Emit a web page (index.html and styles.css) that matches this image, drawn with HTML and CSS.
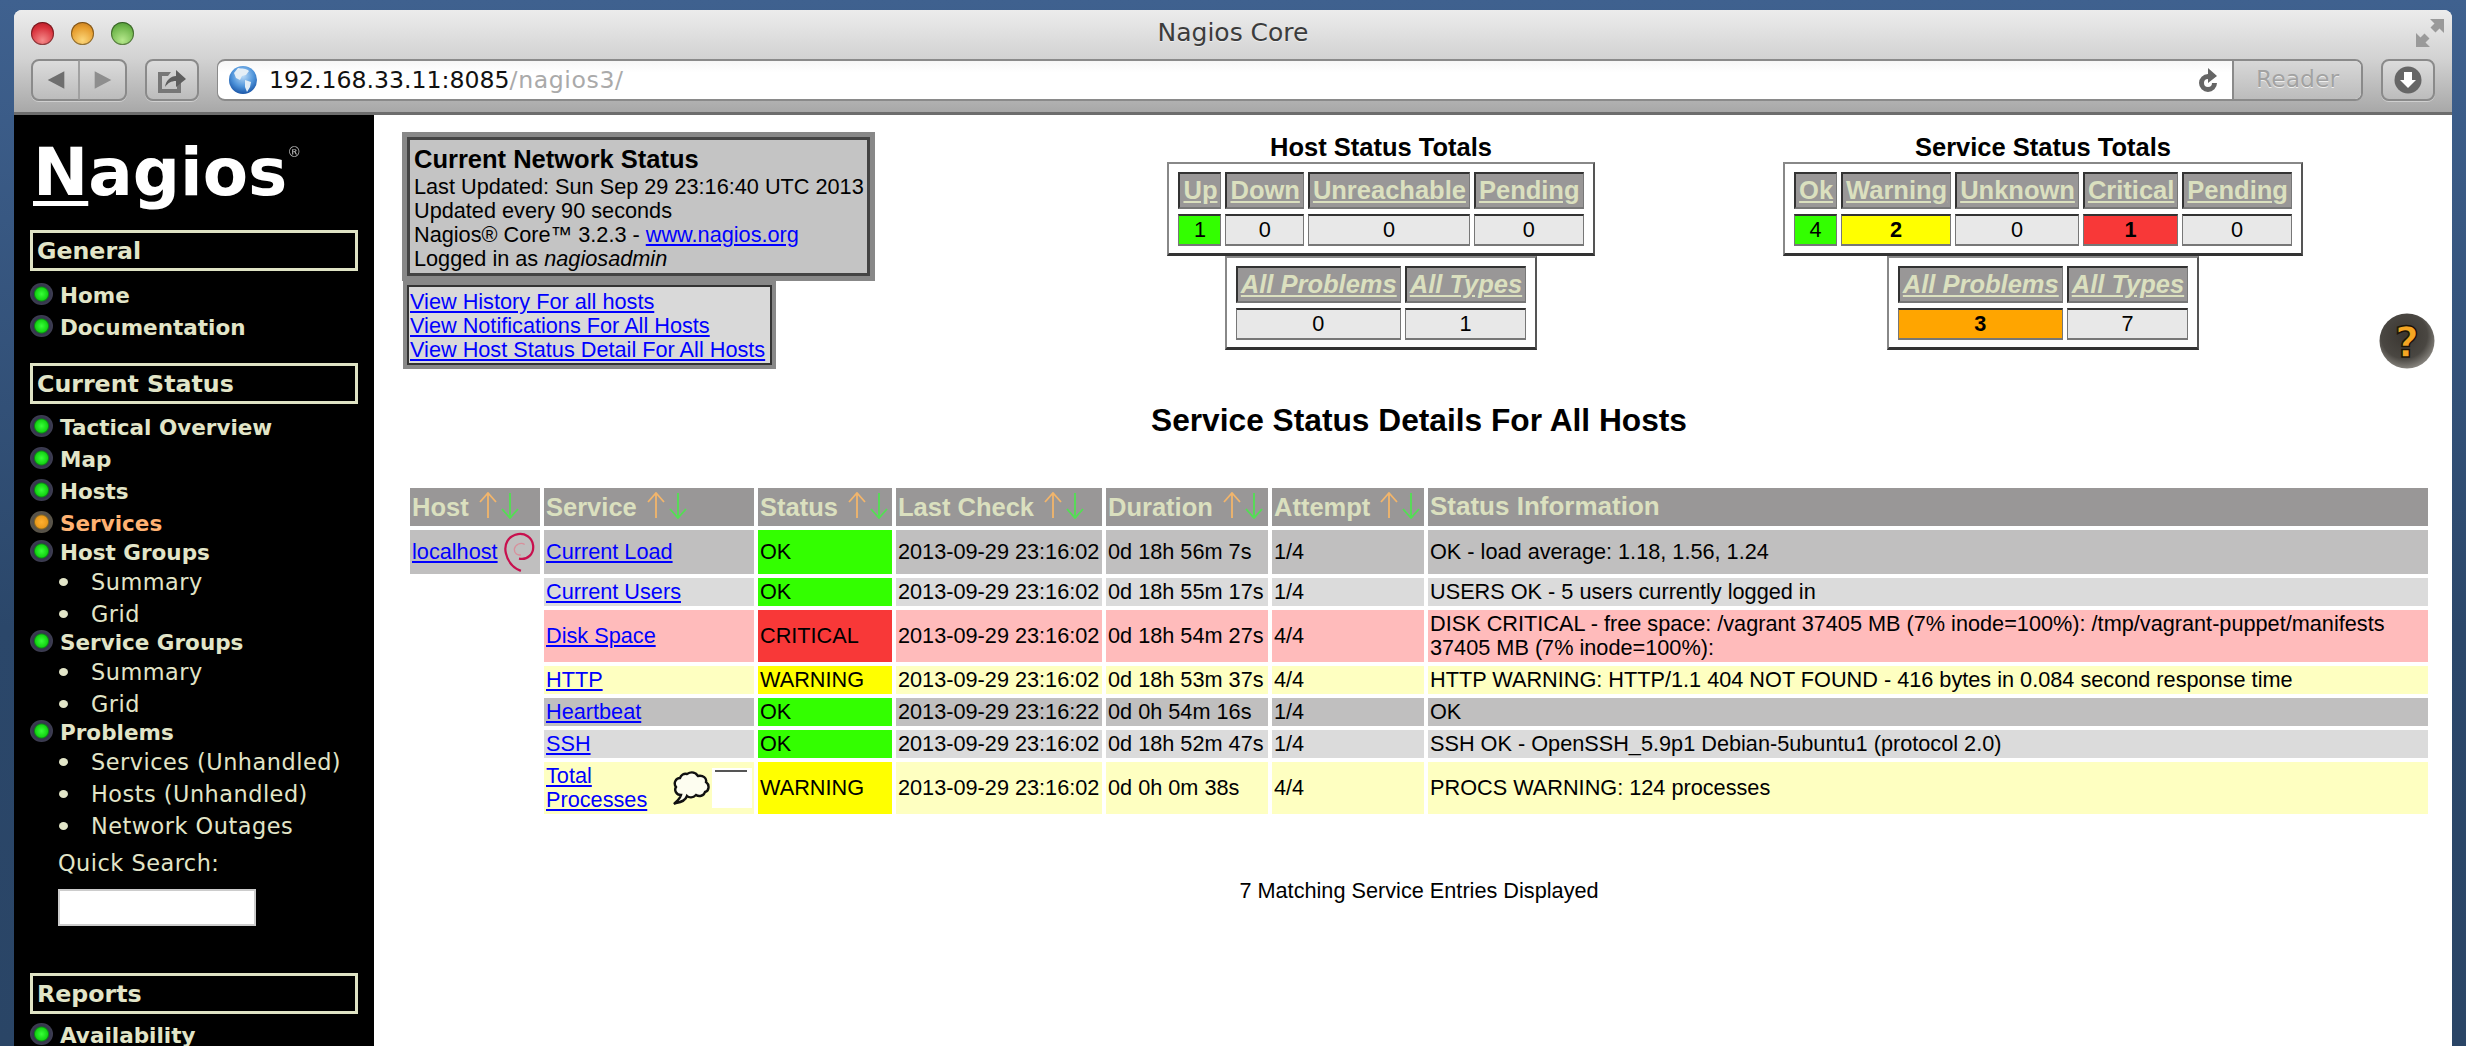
FILE: index.html
```html
<!DOCTYPE html>
<html lang="en">
<head>
  <meta charset="UTF-8">
  <title>Nagios Core</title>
  <link rel="stylesheet" href="styles.css">
</head>
<body>
  <div class="window">
    <!-- browser chrome -->
    <div class="chrome">
      <div class="titlebar">
        <div class="lights">
          <span class="light light-red"></span>
          <span class="light light-yellow"></span>
          <span class="light light-green"></span>
        </div>
        <div class="win-title">Nagios Core</div>
        <div class="fullscreen">
          <svg width="28" height="28" viewBox="0 0 28 28"><path d="M28 0v14l-4.500-4.500-4 4-5-5 4-4L14 0zM0 28V14l4.500 4.500 4-4 5 5-4 4L14 28z" fill="#9a9a9a"/></svg>
        </div>
      </div>
      <div class="toolbar">
        <div class="tool-btn nav-btns">
          <svg width="48" height="40" viewBox="0 0 48 40"><path d="M32 11v18L15 20z" fill="#6e6e6e"/><path d="M47 0v40" stroke="#a0a0a0" stroke-width="2"/></svg>
          <svg width="46" height="40" viewBox="0 0 46 40"><path d="M15 11v18l17-9z" fill="#8e8e8e"/></svg>
        </div>
        <div class="tool-btn share-btn">
          <svg width="30" height="30" viewBox="0 0 30 30"><path d="M1 7h13l-3 4H5v13h15v-6l4-3v13H1z" fill="#777"/><path d="M8 22c1-7 6-11 11-11V5l10 9-10 8v-6c-5 0-8 2-11 6z" fill="#5e5e5e"/></svg>
        </div>
        <div class="address">
          <svg class="globe" width="28" height="28" viewBox="0 0 28 28">
            <defs><radialGradient id="sea" cx="50%" cy="35%" r="65%"><stop offset="0" stop-color="#bcdcf8"/><stop offset="0.6" stop-color="#4f94da"/><stop offset="1" stop-color="#1a56a8"/></radialGradient></defs>
            <circle cx="14" cy="14" r="14" fill="url(#sea)"/>
            <path d="M9 2c4 1 8 0 11 3l-3 4-4 1-2 4-4-2-2-5zM16 14l6 2-1 5-3 5-2-5z" fill="#e4eef6"/>
          </svg>
          <span class="url"><span class="url-host">192.168.33.11:8085</span><span class="url-path">/nagios3/</span></span>
          <svg class="reload" width="22" height="24" viewBox="0 0 22 24"><path d="M11 6a9 9 0 1 0 9 9h-5a4 4 0 1 1-4-4v4l9-7-9-8z" fill="#666"/></svg>
          <div class="reader">Reader</div>
        </div>
        <div class="tool-btn download-btn">
          <svg width="28" height="28" viewBox="0 0 28 28"><circle cx="14" cy="14" r="13.500" fill="#666"/><path d="M10 6h8v8h4l-8 8-8-8h4z" fill="#fff"/></svg>
        </div>
      </div>
    </div>

    <div class="page">
      <!-- nagios side menu -->
      <div class="sidebar">
        <div class="logo"><span class="logo-n">N</span>agios<sup class="logo-reg">®</sup></div>

        <div class="nav-head">General</div>
        <div class="nav-list">
          <div class="nav-item"><span class="led"></span>Home</div>
          <div class="nav-item"><span class="led"></span>Documentation</div>
        </div>

        <div class="nav-head nav-head-next">Current Status</div>
        <div class="nav-list nav-list-tight">
          <div class="nav-item"><span class="led"></span>Tactical Overview</div>
          <div class="nav-item"><span class="led"></span>Map</div>
          <div class="nav-item"><span class="led"></span>Hosts</div>
          <div class="nav-item nav-active"><span class="led led-orange"></span>Services</div>
          <div class="nav-item nav-parent"><span class="led"></span>Host Groups</div>
          <div class="nav-sub">Summary</div>
          <div class="nav-sub">Grid</div>
          <div class="nav-item nav-parent"><span class="led"></span>Service Groups</div>
          <div class="nav-sub">Summary</div>
          <div class="nav-sub">Grid</div>
          <div class="nav-item nav-parent"><span class="led"></span>Problems</div>
          <div class="nav-sub">Services (Unhandled)</div>
          <div class="nav-sub">Hosts (Unhandled)</div>
          <div class="nav-sub">Network Outages</div>
        </div>
        <div class="search-label">Quick Search:</div>
        <div class="search-box"></div>

        <div class="nav-head">Reports</div>
        <div class="nav-list nav-list-reports">
          <div class="nav-item"><span class="led"></span>Availability</div>
        </div>
      </div>

      <div class="content">
        <div class="top-row">
          <div class="info-col">
            <div class="info-box">
              <div class="info-title">Current Network Status</div>
              <div>Last Updated: Sun Sep 29 23:16:40 UTC 2013</div>
              <div>Updated every 90 seconds</div>
              <div>Nagios® Core™ 3.2.3 - <a href="#">www.nagios.org</a></div>
              <div>Logged in as <i>nagiosadmin</i></div>
            </div>
            <div class="links-box">
              <div><a href="#">View History For all hosts</a></div>
              <div><a href="#">View Notifications For All Hosts</a></div>
              <div><a href="#">View Host Status Detail For All Hosts</a></div>
            </div>
          </div>

          <div class="totals totals-host">
            <div class="totals-title">Host Status Totals</div>
            <table class="totals-table">
              <tr><th><a href="#">Up</a></th><th><a href="#">Down</a></th><th><a href="#">Unreachable</a></th><th><a href="#">Pending</a></th></tr>
              <tr><td class="bg-ok">1</td><td>0</td><td>0</td><td>0</td></tr>
            </table>
            <table class="totals-table totals-sub">
              <tr><th><a href="#">All Problems</a></th><th><a href="#">All Types</a></th></tr>
              <tr><td>0</td><td>1</td></tr>
            </table>
          </div>

          <div class="totals totals-service">
            <div class="totals-title">Service Status Totals</div>
            <table class="totals-table">
              <tr><th><a href="#">Ok</a></th><th><a href="#">Warning</a></th><th><a href="#">Unknown</a></th><th><a href="#">Critical</a></th><th><a href="#">Pending</a></th></tr>
              <tr><td class="bg-ok">4</td><td class="bg-warn strong">2</td><td>0</td><td class="bg-crit strong">1</td><td>0</td></tr>
            </table>
            <table class="totals-table totals-sub">
              <tr><th><a href="#">All Problems</a></th><th><a href="#">All Types</a></th></tr>
              <tr><td class="bg-orange strong">3</td><td>7</td></tr>
            </table>
          </div>

          <svg class="help" width="56" height="56" viewBox="0 0 56 56">
            <defs><radialGradient id="knob" cx="45%" cy="40%" r="60%"><stop offset="0" stop-color="#3a3631"/><stop offset="0.7" stop-color="#4a4742"/><stop offset="1" stop-color="#85827c"/></radialGradient></defs>
            <circle cx="28" cy="28" r="27.500" fill="url(#knob)"/>
            <text x="28" y="44" text-anchor="middle" class="help-mark">?</text>
          </svg>
        </div>

        <div class="details">
          <div class="details-title">Service Status Details For All Hosts</div>
          <table class="status-table">
            <colgroup>
              <col class="c-host"><col class="c-service"><col class="c-status"><col class="c-check"><col class="c-duration"><col class="c-attempt"><col class="c-info">
            </colgroup>
            <tr>
              <th><span class="th-in">Host <svg width="42" height="27" viewBox="0 0 42 27"><path d="M10 26V2M2 10l8-9 8 9" class="arrow-up"/><path d="M32 1v24M24 17l8 9 8-9" class="arrow-down"/></svg></span></th>
              <th><span class="th-in">Service <svg width="42" height="27" viewBox="0 0 42 27"><path d="M10 26V2M2 10l8-9 8 9" class="arrow-up"/><path d="M32 1v24M24 17l8 9 8-9" class="arrow-down"/></svg></span></th>
              <th><span class="th-in">Status <svg width="42" height="27" viewBox="0 0 42 27"><path d="M10 26V2M2 10l8-9 8 9" class="arrow-up"/><path d="M32 1v24M24 17l8 9 8-9" class="arrow-down"/></svg></span></th>
              <th><span class="th-in">Last Check <svg width="42" height="27" viewBox="0 0 42 27"><path d="M10 26V2M2 10l8-9 8 9" class="arrow-up"/><path d="M32 1v24M24 17l8 9 8-9" class="arrow-down"/></svg></span></th>
              <th><span class="th-in">Duration <svg width="42" height="27" viewBox="0 0 42 27"><path d="M10 26V2M2 10l8-9 8 9" class="arrow-up"/><path d="M32 1v24M24 17l8 9 8-9" class="arrow-down"/></svg></span></th>
              <th><span class="th-in">Attempt <svg width="42" height="27" viewBox="0 0 42 27"><path d="M10 26V2M2 10l8-9 8 9" class="arrow-up"/><path d="M32 1v24M24 17l8 9 8-9" class="arrow-down"/></svg></span></th>
              <th class="th-info">Status Information</th>
            </tr>
            <tr class="row-odd">
              <td class="cell-host"><div class="cell-flex"><a href="#">localhost</a>
                <svg class="debian" width="32" height="40" viewBox="10 7 34 42"><path d="M27 35C36 37 43 30 42 21 41 12 33 8 26 9 15 11 11 20 13 29 15 38 21 45 29 48" fill="none" stroke="#c8104e" stroke-width="2.400"/><path d="M33 20C29 17 23 20 22 25 22 29 25 32 29 31" fill="none" stroke="#d8909c" stroke-width="1.400"/></svg>
              </div></td>
              <td><a href="#">Current Load</a></td>
              <td class="bg-ok">OK</td>
              <td>2013-09-29 23:16:02</td><td>0d 18h 56m 7s</td><td>1/4</td>
              <td>OK - load average: 1.18, 1.56, 1.24</td>
            </tr>
            <tr class="row-even">
              <td class="cell-blank"></td>
              <td><a href="#">Current Users</a></td>
              <td class="bg-ok">OK</td>
              <td>2013-09-29 23:16:02</td><td>0d 18h 55m 17s</td><td>1/4</td>
              <td>USERS OK - 5 users currently logged in</td>
            </tr>
            <tr class="row-crit">
              <td class="cell-blank"></td>
              <td><a href="#">Disk Space</a></td>
              <td class="bg-crit">CRITICAL</td>
              <td>2013-09-29 23:16:02</td><td>0d 18h 54m 27s</td><td>4/4</td>
              <td>DISK CRITICAL - free space: /vagrant 37405 MB (7% inode=100%): /tmp/vagrant-puppet/manifests 37405 MB (7% inode=100%):</td>
            </tr>
            <tr class="row-warn">
              <td class="cell-blank"></td>
              <td><a href="#">HTTP</a></td>
              <td class="bg-warn">WARNING</td>
              <td>2013-09-29 23:16:02</td><td>0d 18h 53m 37s</td><td>4/4</td>
              <td>HTTP WARNING: HTTP/1.1 404 NOT FOUND - 416 bytes in 0.084 second response time</td>
            </tr>
            <tr class="row-odd">
              <td class="cell-blank"></td>
              <td><a href="#">Heartbeat</a></td>
              <td class="bg-ok">OK</td>
              <td>2013-09-29 23:16:22</td><td>0d 0h 54m 16s</td><td>1/4</td>
              <td>OK</td>
            </tr>
            <tr class="row-even">
              <td class="cell-blank"></td>
              <td><a href="#">SSH</a></td>
              <td class="bg-ok">OK</td>
              <td>2013-09-29 23:16:02</td><td>0d 18h 52m 47s</td><td>1/4</td>
              <td>SSH OK - OpenSSH_5.9p1 Debian-5ubuntu1 (protocol 2.0)</td>
            </tr>
            <tr class="row-warn">
              <td class="cell-blank"></td>
              <td><div class="cell-flex"><a href="#">Total Processes</a>
                <span class="svc-icons">
                  <svg width="40" height="37" viewBox="0 0 40 37"><path d="M15 3c5-3 9-1 11 2 5-1 9 2 8 6 4 3 3 9-1 10-1 4-6 5-9 3-3 3-7 3-9 1-1 3-5 6-11 7l-2 1c3-3 6-5 7-9-5 0-7-5-5-8-3-4 0-9 4-9 1-3 4-5 7-4z" fill="#fdfdf0" stroke="#111" stroke-width="2.400"/></svg>
                  <span class="svc-note"></span>
                </span>
              </div></td>
              <td class="bg-warn">WARNING</td>
              <td>2013-09-29 23:16:02</td><td>0d 0h 0m 38s</td><td>4/4</td>
              <td>PROCS WARNING: 124 processes</td>
            </tr>
          </table>
          <div class="details-foot">7 Matching Service Entries Displayed</div>
        </div>
      </div>
    </div>
  </div>
</body>
</html>
```

FILE: styles.css
```css
html, body {
  margin: 0;
  height: 100%;
}

body {
  height: 1046px;
  overflow: hidden;
  box-sizing: border-box;
  padding: 10px 14px 0;
  background: linear-gradient(#3f618f, #2b476a 60%, #2a4566);
  font-family: "Liberation Sans", Arial, sans-serif;
  font-size: 21.7px;
  line-height: 24px;
  color: #000;
}

a { color: #0000ff; }

.window {
  height: 1036px;
  display: flex;
  flex-direction: column;
  overflow: hidden;
  border-radius: 8px 8px 0 0;
  background: #fff;
}

/* browser chrome */
.chrome {
  height: 105px;
  flex: none;
  box-sizing: border-box;
  background: linear-gradient(#ececec, #d2d2d2 48%, #a8a8a8);
  border-bottom: 3px solid #6d6d6d;
}

.titlebar {
  height: 49px;
  display: grid;
  grid-template-columns: 1fr auto 1fr;
  align-items: center;
  font-family: "DejaVu Sans", sans-serif;
}

.lights {
  display: flex;
  gap: 17px;
  padding: 0 0 3px 17px;
}

.light {
  width: 23px;
  height: 23px;
  border-radius: 50%;
  box-shadow: inset 0 0 0 1px rgba(0,0,0,0.4);
}

.light-red { background: radial-gradient(circle at 50% 80%, #f58a8a, #d8323c 60%, #a8121c); }
.light-yellow { background: radial-gradient(circle at 50% 80%, #fbd67a, #e69d2e 60%, #b8701a); }
.light-green { background: radial-gradient(circle at 50% 80%, #b6e88c, #72b84e 60%, #3f8a2a); }

.win-title {
  font-size: 25px;
  line-height: 30px;
  color: #3c3c3c;
  padding-bottom: 3px;
  text-shadow: 0 1px 0 rgba(255,255,255,0.5);
}

.fullscreen {
  justify-self: end;
  display: flex;
  padding: 0 8px 3px 0;
}

.toolbar {
  height: 42px;
  display: flex;
  gap: 18px;
  padding: 0 17px;
}

.tool-btn {
  box-sizing: border-box;
  height: 42px;
  display: flex;
  align-items: center;
  justify-content: center;
  border: 2px solid #8a8a8a;
  border-radius: 8px;
  background: linear-gradient(#dcdcdc, #bcbcbc);
  box-shadow: 0 1px 0 rgba(255,255,255,0.4);
}

.nav-btns { width: 96px; }
.share-btn { width: 54px; }
.download-btn { width: 54px; }

.address {
  flex: 1;
  height: 42px;
  box-sizing: border-box;
  display: flex;
  align-items: center;
  padding-left: 11px;
  border: 2px solid #8a8a8a;
  border-left-width: 1px;
  border-radius: 8px;
  background: linear-gradient(#f6f6f6, #fff 30%);
  overflow: hidden;
}

.globe { flex: none; }

.url {
  flex: 1;
  margin-left: 12px;
  font-family: "DejaVu Sans", sans-serif;
  font-size: 23.600px;
}

.url-host { color: #111; }
.url-path { color: #aaa; letter-spacing: 0.6px; }

.reload {
  flex: none;
  margin-right: 13px;
}

.reader {
  flex: none;
  width: 129px;
  height: 100%;
  box-sizing: border-box;
  border-left: 2px solid #8a8a8a;
  background: linear-gradient(#d8d8d8, #bcbcbc);
  text-align: center;
  font-family: "DejaVu Sans", sans-serif;
  font-size: 23.500px;
  line-height: 37px;
  color: #a2a2a2;
  text-shadow: 0 1px 0 #eee;
}

/* page below the chrome */
.page {
  flex: 1;
  display: flex;
  min-height: 0;
}

.sidebar {
  width: 360px;
  flex: none;
  box-sizing: border-box;
  padding: 22px 16px 0;
  overflow: hidden;
  background: #000;
  font-family: "DejaVu Sans", sans-serif;
  font-size: 22.400px;
  color: #e2e5c8;
}

.logo {
  height: 93px;
  margin-left: 3px;
  font-weight: bold;
  font-size: 66px;
  line-height: 72px;
  color: #fff;
  filter: blur(0.7px);
}

.logo-n {
  text-decoration: underline;
  text-decoration-thickness: 5px;
  text-underline-offset: 6px;
}

.logo-reg {
  font-size: 14px;
  font-weight: normal;
  line-height: 0;
  vertical-align: 38px;
  color: #bbb;
}

.nav-head {
  height: 41px;
  box-sizing: border-box;
  border: 3px solid #dfe3c4;
  padding-left: 4px;
  font-weight: bold;
  font-size: 23.700px;
  line-height: 36px;
}

.nav-head-next { margin-top: 19px; }

.nav-list { padding: 9px 0 0; }
.nav-list-tight { padding-top: 8px; }
.nav-list-reports { padding-top: 6px; }

.nav-item {
  height: 32px;
  display: flex;
  align-items: center;
  font-weight: bold;
  font-size: 21.500px;
  line-height: 32px;
}

.nav-parent { height: 25px; }

.nav-active { color: #ffb272; }

.led {
  width: 23px;
  height: 22px;
  flex: none;
  margin: -4px 7px 0 0;
  border-radius: 50%;
  background: radial-gradient(circle at 50% 50%, #38ff38 0, #14d414 6px, #0c8a14 7px, #34344c 8px, #3e3e52 11px);
}

.led-orange {
  background: radial-gradient(circle at 50% 50%, #ffb030 0, #eb9a1c 6px, #8a6a20 7px, #55504a 8px, #5a5548 11px);
}

.nav-sub {
  height: 32px;
  position: relative;
  padding-left: 61px;
  line-height: 32px;
  letter-spacing: 0.5px;
}

.nav-sub::before {
  content: "";
  position: absolute;
  left: 29px;
  top: 12px;
  width: 9px;
  height: 8px;
  border-radius: 50%;
  background: #e2e5c8;
}

.nav-parent + .nav-sub { margin-top: 1px; }

.search-label {
  margin-top: 6px;
  padding-left: 28px;
  line-height: 30px;
  letter-spacing: 0.5px;
}

.search-box {
  width: 198px;
  height: 37px;
  margin: 11px 0 47px 28px;
  background: #fff;
  box-sizing: border-box;
  border: 2px solid #ccc;
}

/* main frame */
.content {
  flex: 1;
  min-width: 0;
  padding-top: 17px;
}

.top-row {
  display: flex;
  align-items: flex-start;
  height: 237px;
  padding-left: 28px;
}

.info-col {
  width: 473px;
  flex: none;
  display: flex;
  flex-direction: column;
  align-items: flex-start;
  white-space: nowrap;
}

.info-box {
  width: 100%;
  box-sizing: border-box;
  padding: 7px 7px 5px;
  border: 5px solid #888;
  background: #c4c4c4;
  box-shadow: inset 0 0 0 3px #444;
}

.info-title {
  font-weight: bold;
  font-size: 25.500px;
  line-height: 31px;
}

.links-box {
  margin-left: 1px;
  padding: 5px 7px 3px 3px;
  border: 4px solid #888;
  background: #d9d9d9;
  box-shadow: inset 0 0 0 2px #333;
}

.totals {
  flex: none;
  display: flex;
  flex-direction: column;
  align-items: center;
}

.totals-host { width: 426px; margin-left: 293px; }
.totals-service { width: 522px; margin-left: 188px; }

.totals-title {
  height: 30px;
  font-weight: bold;
  font-size: 25.500px;
  line-height: 30px;
}

.totals-table {
  border-collapse: separate;
  border-spacing: 4px 5px;
  padding: 3px 5px 2px;
  background: #fff;
  border-style: solid;
  border-width: 2px 2px 3px;
  border-color: #888 #555 #333 #888;
}

.totals-table th {
  padding: 0 3px;
  background: #999797;
  font-size: 25.500px;
  line-height: 33px;
  border-style: solid;
  border-width: 2px 1px 2px 2px;
  border-color: #333 #777 #777 #333;
}

.totals-table th a { color: #dbe0bf; }
.totals-sub th a { font-style: italic; }

.totals-table td {
  padding: 0;
  text-align: center;
  line-height: 28px;
  background: #e8e8e8;
  border-style: solid;
  border-width: 2px 1px 2px 1px;
  border-color: #333 #777 #777 #777;
}

.totals-table td.bg-ok { background: #33ff00; }
.totals-table td.bg-warn { background: #ffff00; }
.totals-table td.bg-crit { background: #f83838; }
.totals-table td.bg-orange { background: #ffa500; }
.totals-table td.strong { font-weight: bold; }

.help {
  flex: none;
  margin: 181px 0 0 75px;
}

.help-mark {
  font-family: "DejaVu Sans", sans-serif;
  font-weight: bold;
  font-size: 42px;
  fill: #f5a623;
  stroke: #1c1408;
  stroke-width: 1.500px;
}

.details {
  width: 2026px;
  margin: 36px 0 0 32px;
  text-align: center;
}

.details-title {
  font-weight: bold;
  font-size: 31.700px;
  line-height: 30px;
  margin-bottom: 49px;
}

.status-table {
  width: 2026px;
  table-layout: fixed;
  border-collapse: separate;
  border-spacing: 4px;
  text-align: left;
}

.c-host { width: 130px; }
.c-service { width: 210px; }
.c-status { width: 134px; }
.c-check { width: 206px; }
.c-duration { width: 162px; }
.c-attempt { width: 152px; }

.status-table th {
  height: 38px;
  padding: 0 0 0 2px;
  background: #999797;
  color: #dbe0bf;
  font-size: 25.500px;
  line-height: 28px;
  white-space: nowrap;
}

.status-table .th-info {
  font-size: 26px;
  padding-bottom: 3px;
  height: 35px;
}

.th-in {
  display: flex;
  align-items: center;
  gap: 9px;
}

.th-in svg { margin-top: -4px; }

.arrow-up, .arrow-down {
  fill: none;
  stroke-width: 1.800;
}

.arrow-up { stroke: #f2b56b; }
.arrow-down { stroke: #52e052; }

.status-table td {
  padding: 2px;
  white-space: normal;
}

.row-odd td { background: #c0bfbf; }
.row-even td { background: #dbdbdb; }
.row-crit td { background: #ffbbbb; }
.row-warn td { background: #feffc1; }

.status-table td.bg-ok { background: #33ff00; }
.status-table td.bg-warn { background: #ffff00; }
.status-table td.bg-crit { background: #f83838; }
.status-table td.cell-blank { background: none; }

.cell-host .debian {
  display: block;
  margin-right: 3px;
}

.cell-flex {
  display: flex;
  align-items: center;
  justify-content: space-between;
}

.svc-icons {
  flex: none;
  display: flex;
  align-items: flex-end;
}

.svc-note {
  width: 40px;
  height: 40px;
  box-sizing: border-box;
  background: #fff;
  background-image: linear-gradient(#555, #555);
  background-size: 32px 2px;
  background-position: 3px 2px;
  background-repeat: no-repeat;
}

.details-foot { margin-top: 61px; }
```
